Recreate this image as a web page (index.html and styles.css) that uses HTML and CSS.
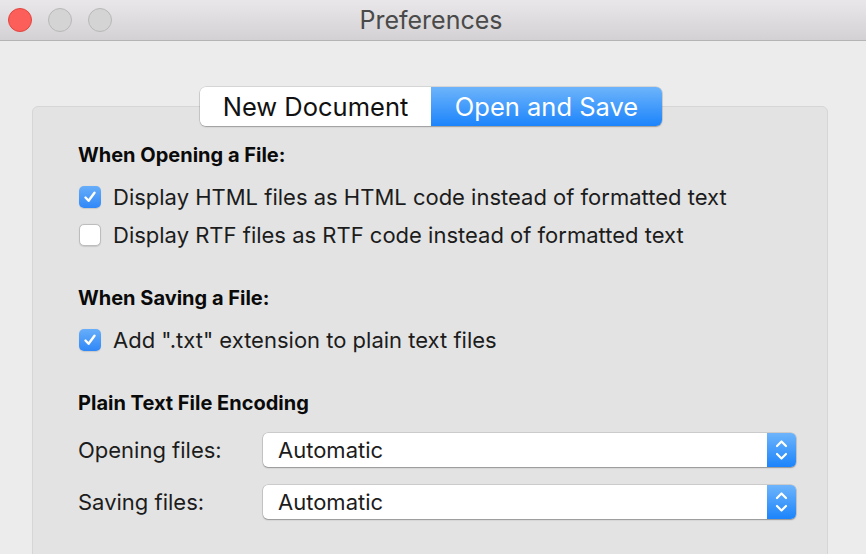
FILE: index.html
```html
<!DOCTYPE html>
<html lang="en">
<head>
    <meta charset="UTF-8">
    <meta name="viewport" content="width=device-width, initial-scale=1.0">
    <title>Preferences</title>
    <link rel="stylesheet" href="styles.css">
</head>
<body>
    <div class="window">
        <div class="titlebar">
            <div class="lights">
                <span class="light close"></span>
                <span class="light"></span>
                <span class="light"></span>
            </div>
            <div class="title">Preferences</div>
        </div>
        <div class="content">
            <div class="panel">
                <div class="tabs">
                    <button type="button" class="tab">New Document</button>
                    <button type="button" class="tab active">Open and Save</button>
                </div>

                <div class="section first">
                    <h2>When Opening a File:</h2>
                    <label class="check-row">
                        <span class="check checked"><svg viewBox="0 0 22 22"><path d="M6.5 11.5 L9.6 14.8 L15.5 6.8"/></svg></span>
                        Display HTML files as HTML code instead of formatted text
                    </label>
                    <label class="check-row">
                        <span class="check"></span>
                        Display RTF files as RTF code instead of formatted text
                    </label>
                </div>

                <div class="section">
                    <h2>When Saving a File:</h2>
                    <label class="check-row">
                        <span class="check checked"><svg viewBox="0 0 22 22"><path d="M6.5 11.5 L9.6 14.8 L15.5 6.8"/></svg></span>
                        Add ".txt" extension to plain text files
                    </label>
                </div>

                <div class="section encoding">
                    <h2>Plain Text File Encoding</h2>
                    <div class="popup-row">
                        <span class="popup-label">Opening files:</span>
                        <div class="popup">
                            <span class="popup-value">Automatic</span>
                            <span class="stepper"><svg viewBox="0 0 29 34"><path d="M10 13 L14.5 8.5 L19 13 M10 21 L14.5 25.5 L19 21"/></svg></span>
                        </div>
                    </div>
                    <div class="popup-row">
                        <span class="popup-label">Saving files:</span>
                        <div class="popup">
                            <span class="popup-value">Automatic</span>
                            <span class="stepper"><svg viewBox="0 0 29 34"><path d="M10 13 L14.5 8.5 L19 13 M10 21 L14.5 25.5 L19 21"/></svg></span>
                        </div>
                    </div>
                </div>
            </div>
        </div>
    </div>
</body>
</html>
```

FILE: styles.css
```css
body {
    margin: 0;
    font-family: Inter, "Noto Sans", sans-serif;
    background-color: #ececec;
    color: #1c1c1c;
    overflow: hidden;
}
.window {
    width: 866px;
    height: 554px;
    overflow: hidden;
}
.titlebar {
    height: 40px;
    border-bottom: 1px solid #b4b4b4;
    background: linear-gradient(#e9e7e9, #d3d1d3);
    display: grid;
    grid-template-columns: 1fr;
    align-items: center;
}
.lights,
.title {
    grid-area: 1 / 1;
}
.lights {
    display: flex;
    gap: 16px;
    padding-left: 8px;
}
.light {
    width: 22px;
    height: 22px;
    border-radius: 50%;
    background-color: #d5d4d5;
    border: 1px solid #b9b8b9;
}
.light.close {
    background-color: #fc5f5a;
    border-color: #e1463f;
}
.title {
    text-align: center;
    font-size: 25px;
    color: #4a4a4a;
    padding-right: 4px;
}
.content {
    padding: 65px 38px 0 32px;
}
.panel {
    background-color: #e3e3e3;
    border: 1px solid #d6d6d6;
    border-radius: 6px;
    height: 500px;
    padding: 0 31px 0 45px;
}
.tabs {
    display: flex;
    width: 462px;
    height: 39px;
    margin: -20px 0 0 122px;
    border-radius: 6px;
    box-shadow: 0 0 0 0.5px rgba(0, 0, 0, 0.18), 0 1px 1.5px rgba(0, 0, 0, 0.25);
    overflow: hidden;
}
.tab {
    flex: 1;
    border: none;
    padding: 0;
    margin: 0;
    font-family: inherit;
    font-size: 25.5px;
    color: #111;
    background-color: #fff;
}
.tab.active {
    color: #fff;
    background: linear-gradient(#6db4fb, #1c84fb);
}
.section {
    margin-top: 30px;
}
.section.first {
    margin-top: 15px;
}
h2 {
    margin: 0 0 9px;
    font-size: 20px;
    font-weight: 700;
    line-height: 28px;
    color: #0a0a0a;
}
.encoding h2 {
    margin-bottom: 7px;
}
.check-row {
    display: flex;
    align-items: center;
    gap: 12px;
    height: 38px;
    font-size: 22px;
    padding-left: 1px;
}
.check {
    width: 22px;
    height: 22px;
    box-sizing: border-box;
    border-radius: 5px;
    background-color: #fff;
    border: 1px solid #bdbdbd;
    box-shadow: 0 0.5px 1px rgba(0, 0, 0, 0.12);
    display: flex;
    flex-shrink: 0;
}
.check.checked {
    border: none;
    background: linear-gradient(#67aefa, #2f87f7);
}
.check svg {
    width: 22px;
    height: 22px;
}
.check path {
    fill: none;
    stroke: #fff;
    stroke-width: 2.4;
    stroke-linecap: round;
    stroke-linejoin: round;
}
.popup-row {
    display: grid;
    grid-template-columns: 185px 1fr;
    align-items: center;
    height: 52px;
    font-size: 22px;
}
.popup {
    display: flex;
    height: 34px;
    border-radius: 5px;
    background-color: #fff;
    box-shadow: 0 0 0 0.5px rgba(0, 0, 0, 0.2), 0 1px 1.5px rgba(0, 0, 0, 0.28);
    overflow: hidden;
}
.popup-value {
    flex: 1;
    padding-left: 15px;
    line-height: 34px;
}
.stepper {
    width: 29px;
    background: linear-gradient(#6db4fb, #1c84fb);
}
.stepper svg {
    width: 29px;
    height: 34px;
    display: block;
}
.stepper path {
    fill: none;
    stroke: #fff;
    stroke-width: 2.2;
    stroke-linecap: round;
    stroke-linejoin: round;
}
```
